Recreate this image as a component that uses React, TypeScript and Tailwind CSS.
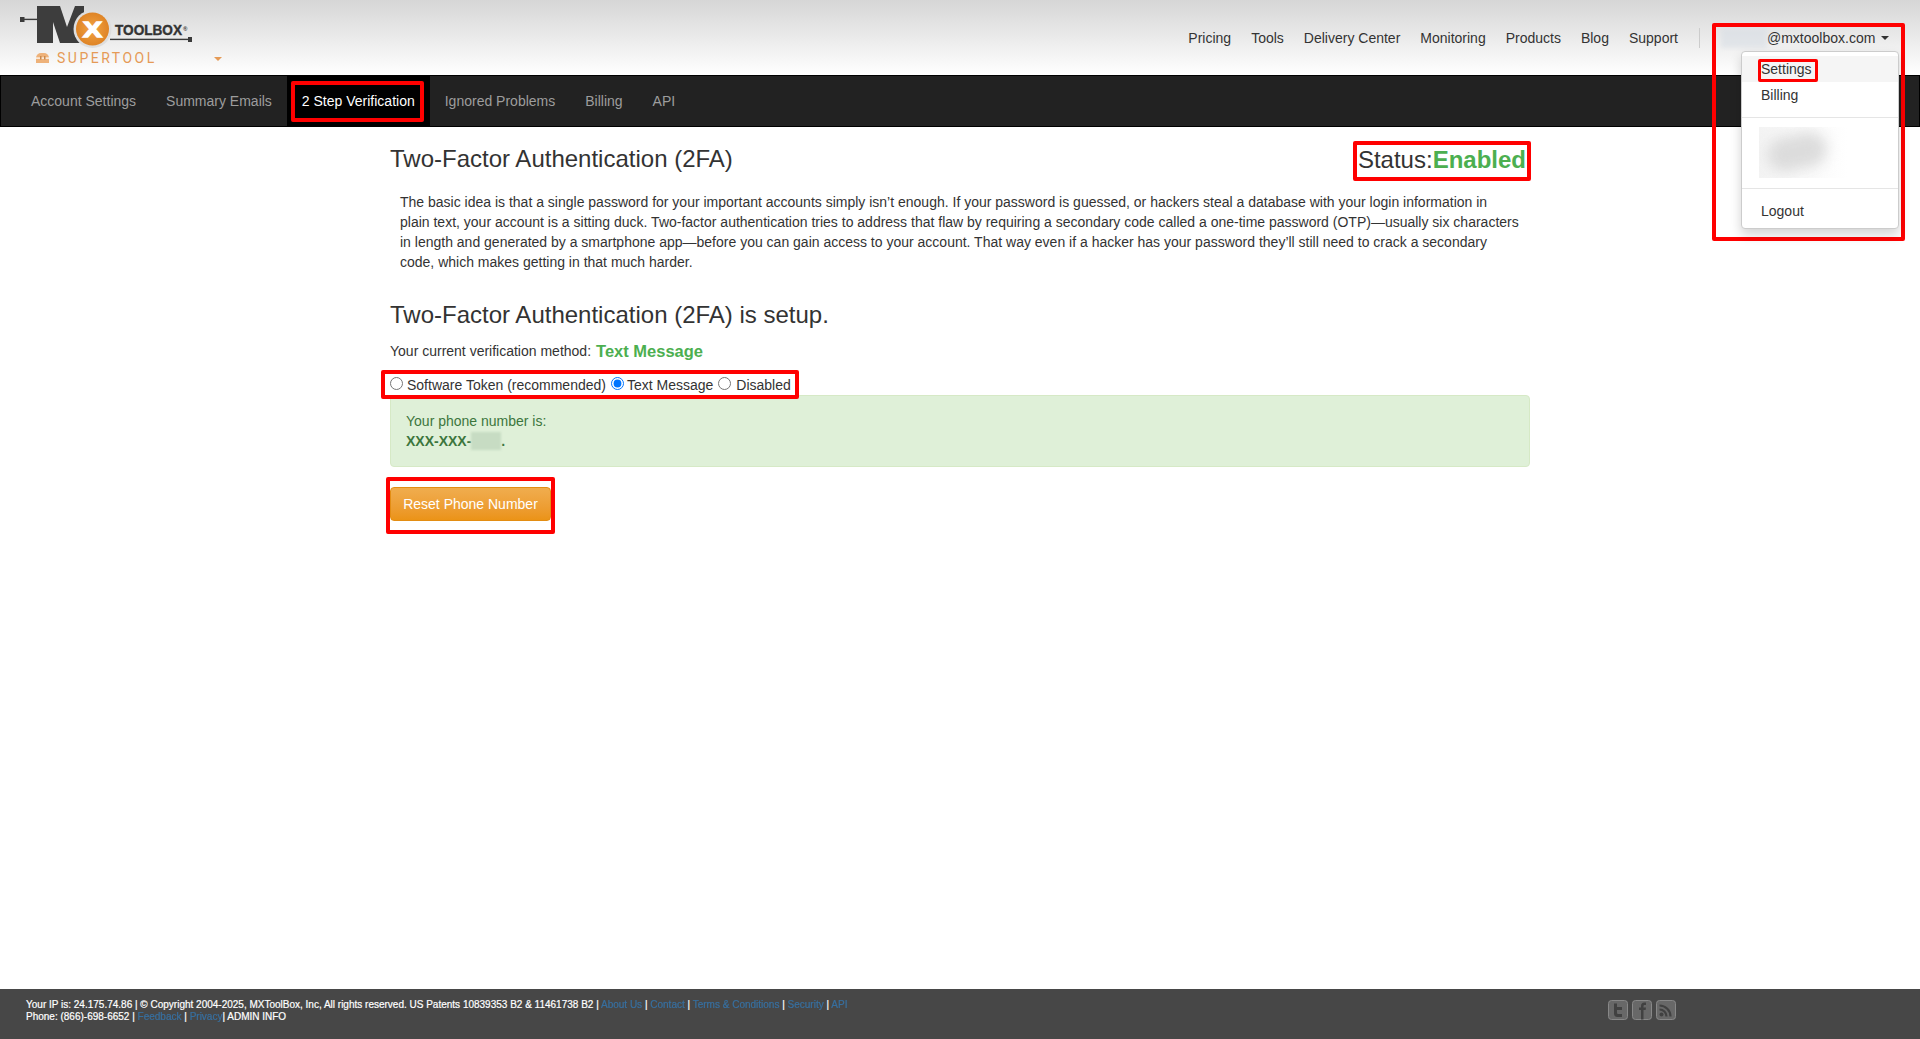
import React from "react";

const font = { fontFamily: '"Liberation Sans", Arial, sans-serif' };

function Logo() {
  return (
    <svg width="200" height="70" viewBox="0 0 200 70" className="block">
      <defs>
        <radialGradient id="orb" cx="50%" cy="50%" r="55%">
          <stop offset="0%" stopColor="#f2a444" />
          <stop offset="100%" stopColor="#dd8123" />
        </radialGradient>
      </defs>
      <rect x="20" y="17" width="4.500" height="5" fill="#3a3a3a" />
      <rect x="24" y="18.700" width="14" height="1.400" fill="#3a3a3a" />
      <polygon points="37,6 60,6 67,27 75,6 84,6 84,43 60,43 53,22 53,43 37,43" fill="#3d3d3d" />
      <circle cx="92.500" cy="29" r="19" fill="#dedede" />
      <circle cx="92.500" cy="29" r="16.500" fill="url(#orb)" />
      <text x="92.500" y="37" textAnchor="middle" fontSize="22" fontWeight="700" fill="#fff" fontFamily="Liberation Sans" stroke="#fff" strokeWidth="1.400" textLength="19" lengthAdjust="spacingAndGlyphs">X</text>
      <text x="115" y="35" fontSize="14" fontWeight="700" fill="#333" stroke="#333" strokeWidth="0.400" fontFamily="Liberation Sans" textLength="67" lengthAdjust="spacingAndGlyphs">TOOLBOX</text>
      <text x="183" y="31" fontSize="6" fontWeight="700" fill="#3a3a3a" fontFamily="Liberation Sans">®</text>
      <rect x="110" y="38.700" width="79" height="1.400" fill="#3a3a3a" />
      <rect x="188" y="37" width="4" height="5" fill="#3a3a3a" />
      <path d="M36 58a5 5 0 0 1 5-5h3a5 5 0 0 1 5 5v5H36z" fill="#eeb27a" />
      <rect x="36" y="57.500" width="13" height="1.200" fill="#fff" />
      <rect x="40" y="56" width="1.500" height="3.500" fill="#c9894e" />
      <rect x="44" y="56" width="1.500" height="3.500" fill="#c9894e" />
    </svg>
  );
}

function Caret({ className }: { className: string }) {
  return <span className={`inline-block w-0 h-0 border-x-4 border-x-transparent border-t-4 ${className}`} />;
}

const topLinks = ["Pricing", "Tools", "Delivery Center", "Monitoring", "Products", "Blog", "Support"];
const subLinks = ["Account Settings", "Summary Emails", "2 Step Verification", "Ignored Problems", "Billing", "API"];

function FooterLink({ children }: { children: React.ReactNode }) {
  return <span className="text-[#337ab7] opacity-80">{children}</span>;
}

export default function App() {
  return (
    <div className="relative min-h-screen flex flex-col bg-white text-[14px] leading-5 text-[#333]" style={font}>
      <header className="relative h-[75px] flex items-start bg-linear-to-b from-[#d6d6d6] to-white">
        <div className="relative w-[230px] h-[75px] shrink-0">
          <Logo />
          <span className="absolute left-[57px] top-[49px] text-[14px] leading-[18px] tracking-[2.5px] text-[#e59a56]" style={{ fontFamily: "Roboto, sans-serif" }}>SUPERTOOL</span>
          <Caret className="absolute left-[214px] top-[57px] border-t-[#e59a56]" />
        </div>
        <nav className="ml-auto flex items-center h-[75px] mr-[31px]">
          {topLinks.map((l) => (
            <span key={l} className="px-[10px] text-[#333]">{l}</span>
          ))}
          <span className="ml-[11px] h-[20px] w-px bg-[#ccc]" />
          <span className="ml-[21px] flex items-center w-[168px]">
            <span className="w-[46px] h-[20px] bg-[#d9dfe6] opacity-60 blur-[2px] shrink-0" />
            <span>@mxtoolbox.com</span>
            <Caret className="ml-[6px] border-t-[#333]" />
          </span>
        </nav>
      </header>

      <nav className="h-[52px] bg-[#222] border border-black flex pl-[15px]">
        {subLinks.map((l) =>
          l === "2 Step Verification" ? (
            <span key={l} className="flex items-center bg-black pl-[4px] pr-[6px] py-[6px]">
              <span className="h-[41px] flex items-center border-[4px] border-[#f00] rounded-[2px] pl-[7px] pr-[5px] text-white">{l}</span>
            </span>
          ) : (
            <span key={l} className="flex items-center px-[15px] text-[#9d9d9d]">{l}</span>
          ),
        )}
      </nav>

      <main className="w-[1140px] mx-auto pt-[14px]">
        <div className="flex justify-between items-start h-[40px]">
          <h1 className="mt-[1px] text-[24px] leading-[34px] font-normal">Two-Factor Authentication (2FA)</h1>
          <div className="h-[40px] flex items-center border-[4px] border-[#f00] pl-[1px] pr-[1px] pb-[2px] mr-[-1px] text-[24px] rounded-[2px]">
            Status:<b className="text-[#4caf50]">Enabled</b>
          </div>
        </div>
        <p className="mt-[11px] pl-[10px] pr-[10px]">
          The basic idea is that a single password for your important accounts simply isn’t enough. If your password is guessed, or hackers steal a database with your login information in plain text, your account is a sitting duck. Two-factor authentication tries to address that flaw by requiring a secondary code called a one-time password (OTP)—usually six characters in length and generated by a smartphone app—before you can gain access to your account. That way even if a hacker has your password they’ll still need to crack a secondary code, which makes getting in that much harder.
        </p>
        <h2 className="mt-[26px] text-[24px] leading-[34px] font-normal">Two-Factor Authentication (2FA) is setup.</h2>
        <div className="mt-[9px] flex items-center h-[20px]">
          Your current verification method:
          <b className="ml-[5px] text-[16.5px] text-[#4caf50]">Text Message</b>
        </div>
        <div className="relative z-10 mt-[9px] ml-[-9px] w-[418px] h-[29px] border-[4px] border-[#f00] rounded-[2px] flex items-center pl-[5px] whitespace-nowrap">
          <input type="radio" name="m" readOnly className="w-[13px] h-[13px] mt-[-2px] mr-[4px] accent-[#0075ff]" />
          <span>Software Token (recommended)</span>
          <input type="radio" name="m" defaultChecked className="w-[13px] h-[13px] mt-[-2px] ml-[5px] mr-[3px] accent-[#0075ff]" />
          <span>Text Message</span>
          <input type="radio" name="m" readOnly className="w-[13px] h-[13px] mt-[-2px] ml-[5px] mr-[5px] accent-[#0075ff]" />
          <span>Disabled</span>
        </div>
        <div className="mt-[-4px] h-[72px] bg-[#dff0d8] border border-[#d6e9c6] rounded-[4px] pt-[15px] px-[15px] text-[#3c763d]">
          <div>Your phone number is:</div>
          <div className="flex items-center">
            <b>XXX-XXX-</b>
            <span className="w-[30px] h-[18px] bg-[#c7dcc3] blur-[1px]" />
            <b>.</b>
          </div>
        </div>
        <div className="mt-[10px] ml-[-4px] w-[169px] h-[57px] border-[4px] border-[#f00] rounded-[2px] pt-[6px]">
          <button className="block w-[161px] h-[34px] rounded-[4px] border border-[#e38d13] bg-linear-to-b from-[#f0ad4e] to-[#eb9316] text-white text-[14px]">
            Reset Phone Number
          </button>
        </div>
      </main>

      <footer className="mt-auto h-[50px] bg-[#474747] pl-[26px] pt-[10px] pr-[244px] flex justify-between">
        <div className="text-[10px] leading-[12px] text-white [-webkit-text-stroke-width:0.2px]">
          <div>
            Your IP is: 24.175.74.86 | © Copyright 2004-2025, MXToolBox, Inc, All rights reserved. US Patents 10839353 B2 &amp; 11461738 B2 | <FooterLink>About Us</FooterLink> | <FooterLink>Contact</FooterLink> | <FooterLink>Terms &amp; Conditions</FooterLink> | <FooterLink>Security</FooterLink> | <FooterLink>API</FooterLink>
          </div>
          <div>
            Phone: (866)-698-6652 | <FooterLink>Feedback</FooterLink> | <FooterLink>Privacy</FooterLink>| ADMIN INFO
          </div>
        </div>
        <div className="flex gap-[4px] items-start mt-[1px]">
          <svg width="20" height="20" viewBox="0 0 20 20"><rect x=".5" y=".5" width="19" height="19" rx="3" fill="#686868" stroke="#888" /><path d="M6 3.500h3v3.500h5v3H9v2.500c0 1 .5 1.500 1.500 1.500H14v3h-4.500C7 17 6 15.500 6 13.500z" fill="#414141" /></svg>
          <svg width="20" height="20" viewBox="0 0 20 20"><rect x=".5" y=".5" width="19" height="19" rx="3" fill="#686868" stroke="#888" /><path d="M9 19.500V10H7V7.500h2V6c0-2.200 1.200-3.500 3.300-3.500H14V5h-1.200c-.9 0-1.300.4-1.300 1.200v1.300H14l-.4 2.500h-2.100v9.500z" fill="#414141" /></svg>
          <svg width="20" height="20" viewBox="0 0 20 20"><rect x=".5" y=".5" width="19" height="19" rx="3" fill="#686868" stroke="#888" /><circle cx="5.500" cy="14.500" r="2" fill="#414141" /><path d="M3.500 9.500a7 7 0 0 1 7 7M3.500 5.500a11 11 0 0 1 11 11" fill="none" stroke="#414141" strokeWidth="2.200" /></svg>
        </div>
      </footer>

      <div className="absolute left-[1712px] top-[23px] w-[193px] h-[218px] border-[4px] border-[#f00] rounded-[2px]" />
      <div className="absolute left-[1741px] top-[51px] w-[158px] h-[178px] bg-white border border-[#ccc] rounded-[4px] shadow-[0_6px_12px_rgba(0,0,0,0.175)] pt-[4px]">
        <div className="relative h-[26px] bg-[#f5f5f5] pl-[19px] leading-[26px]">
          Settings
          <span className="absolute left-[16px] top-[3px] w-[60px] h-[23px] border-[3px] border-[#f00] rounded-[2px]" />
        </div>
        <div className="h-[26px] pl-[19px] leading-[26px]">Billing</div>
        <div className="mt-[9px] h-px bg-[#e5e5e5]" />
        <div className="relative mt-[9px] ml-[17px] w-[88px] h-[51px] overflow-hidden bg-linear-to-r from-[#f3f3f3] to-white">
          <div className="absolute left-[8px] top-[8px] w-[60px] h-[34px] rounded-full bg-[#dcdcdc] blur-[7px] -rotate-12" />
        </div>
        <div className="mt-[10px] h-px bg-[#e5e5e5]" />
        <div className="mt-[9px] h-[26px] pl-[19px] leading-[26px]">Logout</div>
      </div>
    </div>
  );
}
